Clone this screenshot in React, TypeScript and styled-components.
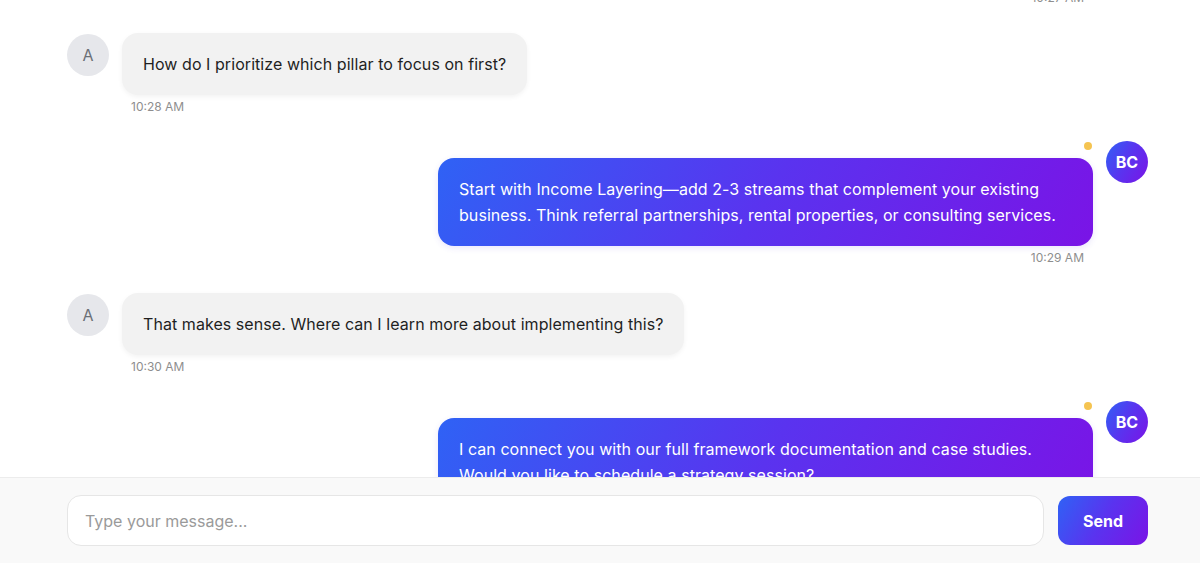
import React, { useLayoutEffect, useRef } from "react";
import styled, { createGlobalStyle } from "styled-components";

const GlobalStyle = createGlobalStyle`
  html, body { margin: 0; padding: 0; background: #ffffff; }
  body { font-family: Inter, "Noto Sans", "Liberation Sans", sans-serif; -webkit-font-smoothing: antialiased; }
  * { box-sizing: border-box; }
`;

const GRADIENT = "linear-gradient(120deg, #2f62f5 0%, #5a33ef 50%, #7a14e6 100%)";

const Shell = styled.div`
  height: 563px;
  display: flex;
  flex-direction: column;
  background: #ffffff;
`;

const Messages = styled.div`
  position: relative;
  flex: 1;
  min-height: 0;
  overflow: hidden;
  padding: 24px 52px 40px 67px;
  display: flex;
  flex-direction: column;
  gap: 27px;
`;

const Row = styled.div<{ $mine?: boolean }>`
  display: flex;
  flex-direction: ${(p) => (p.$mine ? "row-reverse" : "row")};
  align-items: flex-start;
  gap: 13px;
  flex-shrink: 0;
`;

const Avatar = styled.div<{ $mine?: boolean }>`
  width: 42px;
  height: 42px;
  border-radius: 50%;
  flex-shrink: 0;
  display: flex;
  align-items: center;
  justify-content: center;
  font-size: 16px;
  font-weight: ${(p) => (p.$mine ? 700 : 400)};
  color: ${(p) => (p.$mine ? "#ffffff" : "#6b6f76")};
  background: ${(p) => (p.$mine ? GRADIENT : "#e6e7eb")};
  margin-top: ${(p) => (p.$mine ? "-1px" : "1px")};
`;

const Column = styled.div<{ $mine?: boolean }>`
  display: flex;
  flex-direction: column;
  align-items: ${(p) => (p.$mine ? "flex-end" : "flex-start")};
  max-width: 655px;
`;

const StatusDot = styled.span`
  width: 8px;
  height: 8px;
  border-radius: 50%;
  background: #f5c451;
  margin: 0 1px 8px 0;
`;

const Bubble = styled.div<{ $mine?: boolean }>`
  padding: 18px 21px;
  font-size: 16px;
  line-height: 26px;
  letter-spacing: 0.06px;
  border-radius: 16px;
  color: ${(p) => (p.$mine ? "#ffffff" : "#1f1f1f")};
  background: ${(p) => (p.$mine ? GRADIENT : "#f2f2f2")};
  box-shadow: ${(p) =>
    p.$mine ? "0 2px 6px rgba(80, 60, 220, 0.12)" : "0 2px 5px rgba(0, 0, 0, 0.05)"};
`;

const Time = styled.div`
  margin-top: 4px;
  padding: 0 9px;
  font-size: 12px;
  line-height: 16px;
  color: #8e8e8e;
`;

const InputBar = styled.div`
  flex-shrink: 0;
  height: 86px;
  border-top: 1px solid #ececec;
  background: #f9f9f9;
  display: flex;
  align-items: center;
  gap: 14px;
  padding: 0 52px 0 67px;
`;

const TextInput = styled.input`
  flex: 1;
  height: 51px;
  border: 1px solid #e6e6e6;
  border-radius: 14px;
  background: #ffffff;
  padding: 0 17px;
  font-family: inherit;
  font-size: 16px;
  color: #222;
  outline: none;
  &::placeholder { color: #9a9a9a; }
`;

const SendButton = styled.button`
  width: 90px;
  height: 49px;
  border: none;
  border-radius: 12px;
  background: ${GRADIENT};
  color: #ffffff;
  font-family: inherit;
  font-size: 16px;
  font-weight: 700;
  cursor: pointer;
`;

type Msg = { id: number; mine: boolean; text: string; time: string };

const messages: Msg[] = [
  { id: 1, mine: false, text: "Can you walk me through the wealth-building framework?", time: "10:26 AM" },
  {
    id: 2,
    mine: true,
    text: "Of course! The framework rests on four pillars: Income Layering, Asset Protection, Tax Efficiency, and Legacy Planning.",
    time: "10:27 AM",
  },
  { id: 3, mine: false, text: "How do I prioritize which pillar to focus on first?", time: "10:28 AM" },
  {
    id: 4,
    mine: true,
    text: "Start with Income Layering—add 2-3 streams that complement your existing business. Think referral partnerships, rental properties, or consulting services.",
    time: "10:29 AM",
  },
  { id: 5, mine: false, text: "That makes sense. Where can I learn more about implementing this?", time: "10:30 AM" },
  {
    id: 6,
    mine: true,
    text: "I can connect you with our full framework documentation and case studies. Would you like to schedule a strategy session?",
    time: "10:31 AM",
  },
];

export default function App() {
  const listRef = useRef<HTMLDivElement>(null);
  const anchorRef = useRef<HTMLDivElement>(null);

  useLayoutEffect(() => {
    const list = listRef.current;
    const anchor = anchorRef.current;
    if (list && anchor) list.scrollTop = anchor.offsetTop - 33;
  }, []);

  return (
    <>
      <GlobalStyle />
      <Shell>
        <Messages ref={listRef}>
          {messages.map((m) => (
            <Row key={m.id} $mine={m.mine} ref={m.id === 3 ? anchorRef : undefined}>
              <Avatar $mine={m.mine}>{m.mine ? "BC" : "A"}</Avatar>
              <Column $mine={m.mine}>
                {m.mine && <StatusDot />}
                <Bubble $mine={m.mine}>{m.text}</Bubble>
                <Time>{m.time}</Time>
              </Column>
            </Row>
          ))}
        </Messages>
        <InputBar>
          <TextInput placeholder="Type your message..." />
          <SendButton>Send</SendButton>
        </InputBar>
      </Shell>
    </>
  );
}
